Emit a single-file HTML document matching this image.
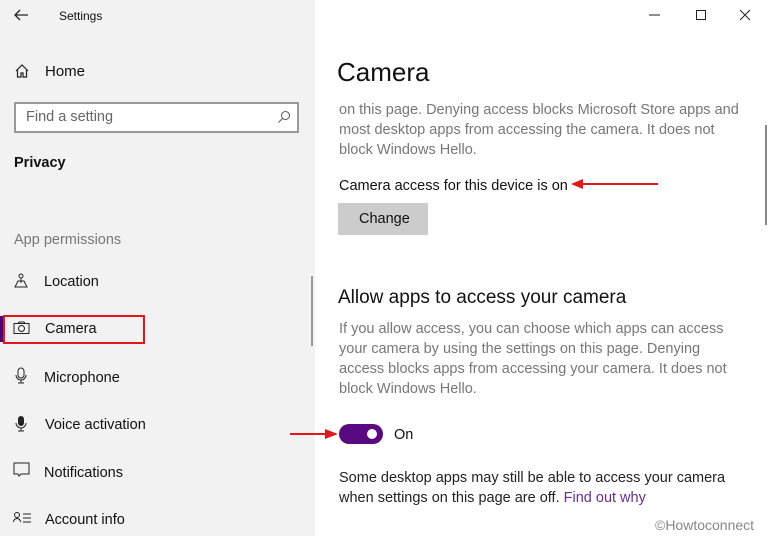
<!DOCTYPE html>
<html><head><style>
*{margin:0;padding:0;box-sizing:border-box}
body{width:768px;height:536px;overflow:hidden;background:#fff;font-family:"Liberation Sans",sans-serif;color:#111;position:relative}
.side{position:absolute;left:0;top:0;width:315px;height:536px;background:#f2f2f2}
.a{position:absolute;white-space:nowrap}
.g{color:#7a7a7a}
.nav{font-size:14.5px;color:#111}
svg{position:absolute}
</style></head><body>
<div class="side">
<svg style="left:12px;top:8px" width="18" height="14"><path d="M16 7H3M8 2L3 7l5 5" stroke="#222" stroke-width="1.3" fill="none"/></svg>
<div class="a" style="left:59px;top:9px;font-size:12px">Settings</div>
<svg style="left:14px;top:63px" width="16" height="16"><path d="M2 8L8 2l6 6M3.5 7v7h3.5v-4h2v4h3.5V7" stroke="#222" stroke-width="1.2" fill="none"/></svg>
<div class="a nav" style="left:45px;top:63px;font-size:15px">Home</div>
<div class="a" style="left:14px;top:102px;width:285px;height:31px;border:2px solid #999;background:#fff"></div>
<div class="a g" style="left:26px;top:109px;font-size:14.5px;color:#666">Find a setting</div>
<svg style="left:277px;top:110px" width="14" height="14"><circle cx="8.5" cy="5.5" r="4" stroke="#555" fill="none"/><path d="M5.5 8.5L1.5 12.5" stroke="#555"/></svg>
<div class="a" style="left:14px;top:155px;font-size:14.5px;font-weight:bold">Privacy</div>
<div class="a g" style="left:14px;top:232px;font-size:14.5px;color:#777">App permissions</div>
<svg style="left:13px;top:273px" width="16" height="16"><circle cx="8" cy="3" r="2" stroke="#222" fill="none"/><path d="M8 5v5M2 14l3-6h6l3 6z" stroke="#222" fill="none"/></svg>
<div class="a nav" style="left:44px;top:274px">Location</div>
<div class="a" style="left:0;top:316px;width:3px;height:26px;background:#4b0082"></div>
<div class="a" style="left:3px;top:315px;width:142px;height:29px;border:2px solid #e3161b"></div>
<svg style="left:13px;top:321px" width="18" height="14"><rect x="1" y="2.5" width="15" height="10" stroke="#222" fill="none"/><circle cx="8.5" cy="7.5" r="3" stroke="#222" fill="none"/><path d="M5 2.5l1-1.5h5l1 1.5" stroke="#222" fill="none"/></svg>
<div class="a nav" style="left:45px;top:321px">Camera</div>
<svg style="left:15px;top:367px" width="12" height="18"><rect x="3" y="1" width="6" height="10" rx="3" stroke="#222" fill="none"/><path d="M1 8a5 5 0 0 0 10 0M6 13v3M3 16h6" stroke="#222" fill="none"/></svg>
<div class="a nav" style="left:44px;top:370px">Microphone</div>
<svg style="left:15px;top:415px" width="12" height="18"><rect x="3" y="1" width="6" height="10" rx="3" fill="#222"/><path d="M1 8a5 5 0 0 0 10 0M6 13v3M3 16h6" stroke="#222" fill="none"/></svg>
<div class="a nav" style="left:45px;top:417px">Voice activation</div>
<svg style="left:13px;top:462px" width="18" height="16"><path d="M1 1h15v11H8l-2 2-1-2H1z" stroke="#222" fill="none"/></svg>
<div class="a nav" style="left:44px;top:465px">Notifications</div>
<svg style="left:13px;top:511px" width="20" height="14"><circle cx="4" cy="4" r="2.5" stroke="#222" fill="none"/><path d="M0.5 11a3.5 3.5 0 0 1 7 0M10 3h8M10 7h8M10 11h8" stroke="#222" fill="none"/></svg>
<div class="a nav" style="left:45px;top:512px">Account info</div>
<div class="a" style="left:311px;top:276px;width:2px;height:70px;background:#999"></div>
</div>
<svg style="left:648px;top:8px" width="110" height="14"><path d="M1 7h11" stroke="#222"/><rect x="48.5" y="2.5" width="9" height="9" stroke="#222" fill="none"/><path d="M92 2l10 10M102 2L92 12" stroke="#222"/></svg>
<div class="a" style="left:337px;top:57px;font-size:26px;color:#111">Camera</div>
<div class="a g" style="left:339px;top:100px;font-size:14.5px;line-height:20px;color:#777">on this page. Denying access blocks Microsoft Store apps and<br>most desktop apps from accessing the camera. It does not<br>block Windows Hello.</div>
<div class="a" style="left:339px;top:178px;font-size:14.5px">Camera access for this device is on</div>
<svg style="left:570px;top:178px" width="90" height="12"><path d="M12 6h76" stroke="#e3161b" stroke-width="2"/><path d="M1 6l12-5v10z" fill="#e3161b"/></svg>
<div class="a" style="left:338px;top:203px;width:90px;height:32px;background:#ccc"></div>
<div class="a" style="left:359px;top:211px;font-size:14.5px">Change</div>
<div class="a" style="left:338px;top:287px;font-size:19px">Allow apps to access your camera</div>
<div class="a g" style="left:339px;top:319px;font-size:14.5px;line-height:20px;color:#777">If you allow access, you can choose which apps can access<br>your camera by using the settings on this page. Denying<br>access blocks apps from accessing your camera. It does not<br>block Windows Hello.</div>
<svg style="left:289px;top:428px" width="50" height="12"><path d="M1 6h36" stroke="#e3161b" stroke-width="2"/><path d="M49 6l-13-5v10z" fill="#e3161b"/></svg>
<div class="a" style="left:339px;top:424px;width:44px;height:20px;border-radius:10px;background:#5a0a80"></div>
<div class="a" style="left:367px;top:429px;width:10px;height:10px;border-radius:5px;background:#fff"></div>
<div class="a" style="left:394px;top:427px;font-size:14.5px">On</div>
<div class="a" style="left:339px;top:468px;font-size:14.5px;line-height:20px;color:#222">Some desktop apps may still be able to access your camera<br>when settings on this page are off. <span style="color:#6b2d90">Find out why</span></div>
<div class="a" style="left:655px;top:517px;font-size:14px;color:#888">©Howtoconnect</div>
<div class="a" style="left:765px;top:125px;width:2px;height:100px;background:#888"></div>
</body></html>
